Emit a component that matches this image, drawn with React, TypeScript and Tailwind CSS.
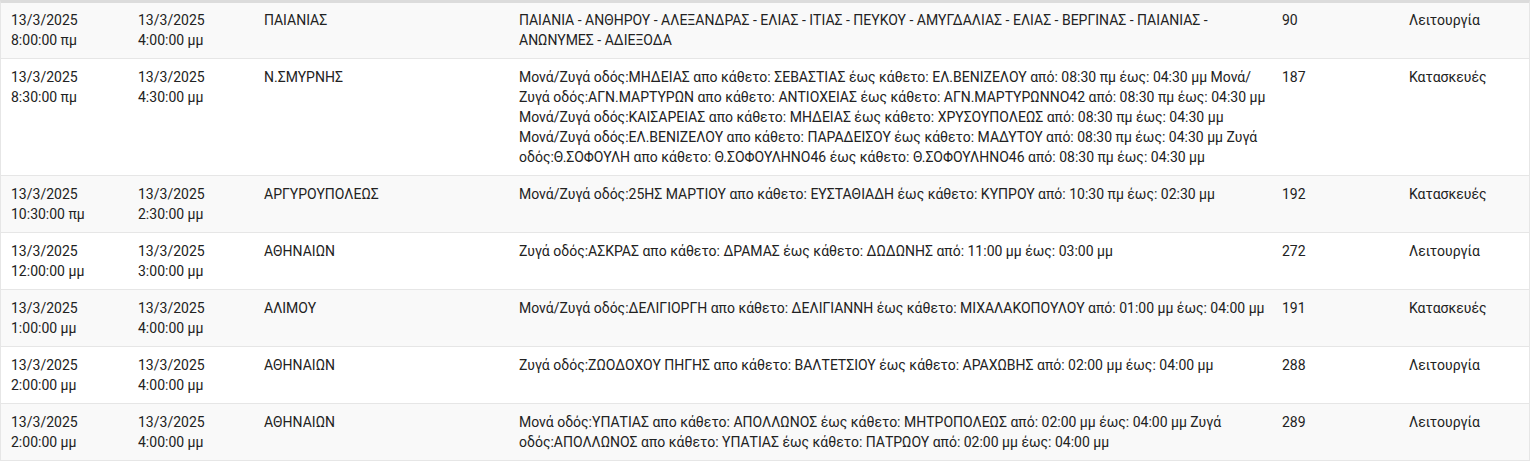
import React from 'react'

interface Outage {
    start: string[];
    end: string[];
    area: string;
    details: string;
    code: number;
    kind: string;
}

const rows: Outage[] = [
    {
        start: ['13/3/2025', '8:00:00 πμ'],
        end: ['13/3/2025', '4:00:00 μμ'],
        area: 'ΠΑΙΑΝΙΑΣ',
        details: 'ΠΑΙΑΝΙΑ - ΑΝΘΗΡΟΥ - ΑΛΕΞΑΝΔΡΑΣ - ΕΛΙΑΣ - ΙΤΙΑΣ - ΠΕΥΚΟΥ - ΑΜΥΓΔΑΛΙΑΣ - ΕΛΙΑΣ - ΒΕΡΓΙΝΑΣ - ΠΑΙΑΝΙΑΣ - ΑΝΩΝΥΜΕΣ - ΑΔΙΕΞΟΔΑ',
        code: 90,
        kind: 'Λειτουργία',
    },
    {
        start: ['13/3/2025', '8:30:00 πμ'],
        end: ['13/3/2025', '4:30:00 μμ'],
        area: 'Ν.ΣΜΥΡΝΗΣ',
        details: 'Μονά/Ζυγά οδός:ΜΗΔΕΙΑΣ απο κάθετο: ΣΕΒΑΣΤΙΑΣ έως κάθετο: ΕΛ.ΒΕΝΙΖΕΛΟΥ από: 08:30 πμ έως: 04:30 μμ Μονά/Ζυγά οδός:ΑΓΝ.ΜΑΡΤΥΡΩΝ απο κάθετο: ΑΝΤΙΟΧΕΙΑΣ έως κάθετο: ΑΓΝ.ΜΑΡΤΥΡΩΝΝΟ42 από: 08:30 πμ έως: 04:30 μμ Μονά/Ζυγά οδός:ΚΑΙΣΑΡΕΙΑΣ απο κάθετο: ΜΗΔΕΙΑΣ έως κάθετο: ΧΡΥΣΟΥΠΟΛΕΩΣ από: 08:30 πμ έως: 04:30 μμ Μονά/Ζυγά οδός:ΕΛ.ΒΕΝΙΖΕΛΟΥ απο κάθετο: ΠΑΡΑΔΕΙΣΟΥ έως κάθετο: ΜΑΔΥΤΟΥ από: 08:30 πμ έως: 04:30 μμ Ζυγά οδός:Θ.ΣΟΦΟΥΛΗ απο κάθετο: Θ.ΣΟΦΟΥΛΗΝΟ46 έως κάθετο: Θ.ΣΟΦΟΥΛΗΝΟ46 από: 08:30 πμ έως: 04:30 μμ',
        code: 187,
        kind: 'Κατασκευές',
    },
    {
        start: ['13/3/2025', '10:30:00 πμ'],
        end: ['13/3/2025', '2:30:00 μμ'],
        area: 'ΑΡΓΥΡΟΥΠΟΛΕΩΣ',
        details: 'Μονά/Ζυγά οδός:25ΗΣ ΜΑΡΤΙΟΥ απο κάθετο: ΕΥΣΤΑΘΙΑΔΗ έως κάθετο: ΚΥΠΡΟΥ από: 10:30 πμ έως: 02:30 μμ',
        code: 192,
        kind: 'Κατασκευές',
    },
    {
        start: ['13/3/2025', '12:00:00 μμ'],
        end: ['13/3/2025', '3:00:00 μμ'],
        area: 'ΑΘΗΝΑΙΩΝ',
        details: 'Ζυγά οδός:ΑΣΚΡΑΣ απο κάθετο: ΔΡΑΜΑΣ έως κάθετο: ΔΩΔΩΝΗΣ από: 11:00 μμ έως: 03:00 μμ',
        code: 272,
        kind: 'Λειτουργία',
    },
    {
        start: ['13/3/2025', '1:00:00 μμ'],
        end: ['13/3/2025', '4:00:00 μμ'],
        area: 'ΑΛΙΜΟΥ',
        details: 'Μονά/Ζυγά οδός:ΔΕΛΙΓΙΟΡΓΗ απο κάθετο: ΔΕΛΙΓΙΑΝΝΗ έως κάθετο: ΜΙΧΑΛΑΚΟΠΟΥΛΟΥ από: 01:00 μμ έως: 04:00 μμ',
        code: 191,
        kind: 'Κατασκευές',
    },
    {
        start: ['13/3/2025', '2:00:00 μμ'],
        end: ['13/3/2025', '4:00:00 μμ'],
        area: 'ΑΘΗΝΑΙΩΝ',
        details: 'Ζυγά οδός:ΖΩΟΔΟΧΟΥ ΠΗΓΗΣ απο κάθετο: ΒΑΛΤΕΤΣΙΟΥ έως κάθετο: ΑΡΑΧΩΒΗΣ από: 02:00 μμ έως: 04:00 μμ',
        code: 288,
        kind: 'Λειτουργία',
    },
    {
        start: ['13/3/2025', '2:00:00 μμ'],
        end: ['13/3/2025', '4:00:00 μμ'],
        area: 'ΑΘΗΝΑΙΩΝ',
        details: 'Μονά οδός:ΥΠΑΤΙΑΣ απο κάθετο: ΑΠΟΛΛΩΝΟΣ έως κάθετο: ΜΗΤΡΟΠΟΛΕΩΣ από: 02:00 μμ έως: 04:00 μμ Ζυγά οδός:ΑΠΟΛΛΩΝΟΣ απο κάθετο: ΥΠΑΤΙΑΣ έως κάθετο: ΠΑΤΡΩΟΥ από: 02:00 μμ έως: 04:00 μμ',
        code: 289,
        kind: 'Λειτουργία',
    },
]

const App = () => {
    return (
        <div className="w-[1530px] bg-white font-['Roboto',sans-serif] text-[14px] leading-[20px] text-[#222]">
            <div className="border-t-[3px] border-t-[#dcdcdc] border-x border-x-[#e6e6e6]">
                {rows.map((row, index) => (
                    <div
                        key={index}
                        className={`grid grid-cols-[126px_126px_255px_763px_127px_1fr] border-b border-b-[#e6e6e6] pb-[8px] ${index === 0 ? 'pt-[7px]' : 'pt-[8px]'} ${index % 2 === 0 ? 'bg-[#f9f9f9]' : 'bg-white'}`}
                    >
                        <div className="pl-[10px] pr-[8px]">
                            <div>{row.start[0]}</div>
                            <div>{row.start[1]}</div>
                        </div>
                        <div className="pl-[11px] pr-[8px]">
                            <div>{row.end[0]}</div>
                            <div>{row.end[1]}</div>
                        </div>
                        <div className="pl-[11px] pr-[8px]">{row.area}</div>
                        <div className="pl-[11px] pr-[5px]">{row.details}</div>
                        <div className="pl-[11px] pr-[8px]">{row.code}</div>
                        <div className="pl-[11px] pr-[8px]">{row.kind}</div>
                    </div>
                ))}
            </div>
        </div>
    )
}

export default App
